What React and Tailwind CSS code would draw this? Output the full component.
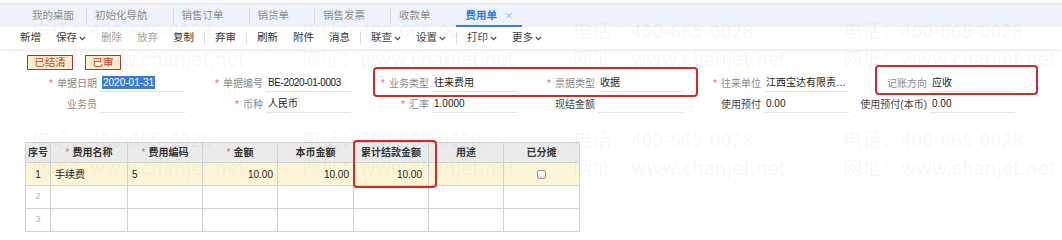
const FONT = { fontFamily: '"Liberation Sans", "Noto Sans CJK SC", sans-serif' }

const TABS = ['我的桌面', '初始化导航', '销售订单', '销货单', '销售发票', '收款单']

const TOOLS = [
  { t: '新增' },
  { t: '保存', drop: true },
  { t: '删除', off: true },
  { t: '放弃', off: true },
  { t: '复制', sep: true },
  { t: '弃审', sep: true },
  { t: '刷新' },
  { t: '附件' },
  { t: '消息', sep: true },
  { t: '联查', drop: true },
  { t: '设置', drop: true, sep: true },
  { t: '打印', drop: true },
  { t: '更多', drop: true },
]

const ROW1 = [
  { label: '单据日期', req: true, value: '2020-01-31', selected: true },
  { label: '单据编号', req: true, value: 'BE-2020-01-0003', tight: true },
  { label: '业务类型', req: true, value: '往来费用' },
  { label: '票据类型', req: true, value: '收据' },
  { label: '往来单位', req: true, value: '江西宝达有限责…' },
  { label: '记账方向', value: '应收' },
]

const ROW2 = [
  { label: '业务员' },
  { label: '币种', req: true, value: '人民币' },
  { label: '汇率', req: true, value: '1.0000' },
  { label: '现结金额', dark: true },
  { label: '使用预付', dark: true, value: '0.00' },
  { label: '使用预付(本币)', dark: true, value: '0.00' },
]

const COLS = [
  { t: '序号', w: 'w-[25px]' },
  { t: '费用名称', w: 'w-[77px]', req: true },
  { t: '费用编码', w: 'w-[75px]', req: true },
  { t: '金额', w: 'w-[75px]', req: true },
  { t: '本币金额', w: 'w-[76px]' },
  { t: '累计结款金额', w: 'w-[75px]' },
  { t: '用途', w: 'w-[75px]' },
  { t: '已分摊', w: 'w-[76px]' },
]

function Chevron() {
  return (
    <svg width="7" height="5" viewBox="0 0 7 5" className="ml-[2px]">
      <path d="M0.8 0.9 L3.5 3.6 L6.2 0.9" fill="none" stroke="currentColor" strokeWidth="1.2" />
    </svg>
  )
}

function Field({ f }) {
  return (
    <div className="flex h-[18px] items-stretch">
      <div
        className={`flex w-[78px] items-center justify-end whitespace-nowrap ${
          f.dark ? 'text-[#444]' : 'text-[#8a8a8a]'
        }`}
      >
        {f.req && <span className="mr-[4px] text-[#ef6a6a]">*</span>}
        {f.label}
      </div>
      <div className="ml-[3px] flex w-[85px] items-center border-b border-[#e2e2e2] pl-[2px] text-[#222]">
        {f.selected ? (
          <span className="bg-[#3c7ad9] px-[1px] leading-[13px] text-white">{f.value}</span>
        ) : (
          <span className={`whitespace-nowrap ${f.tight ? 'tracking-[-0.4px]' : ''}`}>{f.value}</span>
        )}
      </div>
    </div>
  )
}

function Watermarks() {
  const xs = [32, 302, 573, 843]
  const ys = [20, 129]
  return (
    <div className="pointer-events-none absolute inset-0" style={{ fontFamily: '"Noto Sans CJK SC", sans-serif' }}>
      {ys.map((y) =>
        xs.map((x) => (
          <div key={`${x}-${y}`} className="absolute text-[19px] leading-[20px] tracking-[0.3px] text-black/[0.055]" style={{ left: x, top: y }}>
            <div className="whitespace-nowrap">电话：400-665-0028</div>
            <div className="mt-[8px] whitespace-nowrap">网址：www.chanjet.net</div>
          </div>
        ))
      )}
    </div>
  )
}

export default function App() {
  return (
    <div className="relative h-[240px] w-[1062px] overflow-hidden bg-white text-[10px]" style={FONT}>
      {/* 标签页 */}
      <div className="mt-[3px] flex h-[24px] items-stretch border-t border-[#dfe4ea] bg-[#eef3fb] pl-[24px] text-[10.5px]">
        {TABS.map((t, i) => (
          <div key={t} className="flex items-stretch">
            <div className={`flex items-center pl-[8px] text-[#8d8d8d] ${i === 0 ? 'pr-[12px]' : 'pr-[25px]'}`}>{t}</div>
            {i < TABS.length - 1 && <span className="h-[14px] w-px self-center bg-[#d6dce4]" />}
          </div>
        ))}
        <div className="flex items-center border-b-2 border-[#3b7fe3] pl-[10px] pr-[9px] pt-[2px] font-bold text-[#2f79e4]">
          费用单
          <span className="ml-[8px] text-[13px] font-normal text-[#b4bccb]">×</span>
        </div>
      </div>

      {/* 工具栏 */}
      <div className="flex h-[22px] items-center gap-[15px] pl-[20px] text-[10.5px] text-[#333] shadow-[0_2px_3px_rgba(0,0,0,0.07)]">
        {TOOLS.map((b) => (
          <div key={b.t} className="contents">
            <span className={`flex items-center ${b.off ? 'text-[#a8a8a8]' : ''} ${b.drop ? 'text-[#444]' : ''}`}>
              {b.t}
              {b.drop && <Chevron />}
            </span>
            {b.sep && <span className="-mx-[5px] h-[12px] w-px bg-[#dcdcdc]" />}
          </div>
        ))}
      </div>

      {/* 状态 */}
      <div className="ml-[27px] mt-[6px] flex h-[15px] gap-[12px] text-[10.5px]">
        <span className="flex w-[46px] items-center justify-center border-[1.5px] border-[#b9302a] bg-[#fcf0cf] text-[#d5372d]">已结清</span>
        <span className="flex w-[36px] items-center justify-center border-[1.5px] border-[#b9302a] bg-[#fcf0cf] text-[#d5372d]">已审</span>
      </div>

      {/* 表头 */}
      <div className="ml-[19px] mt-[4px] grid grid-cols-[repeat(6,166px)] gap-y-[3px]">
        {ROW1.map((f) => (
          <Field key={f.label} f={f} />
        ))}
        {ROW2.map((f) => (
          <Field key={f.label} f={f} />
        ))}
      </div>

      {/* 表体 */}
      <table className="ml-[25px] mt-[29px] table-fixed border-collapse">
        <thead>
          <tr className="h-[20px] bg-[#ebebeb]">
            {COLS.map((c) => (
              <th key={c.t} className={`${c.w} border border-[#d2d2d2] p-0 text-center font-bold text-[#333]`}>
                {c.req && <span className="mr-[3px] font-normal text-[#ef6a6a]">*</span>}
                {c.t}
              </th>
            ))}
          </tr>
        </thead>
        <tbody>
          <tr className="h-[23px] bg-[#fdf6d6] text-[#222]">
            <td className="border border-[#d2d2d2] text-center">1</td>
            <td className="border border-[#d2d2d2] pl-[4px]">手续费</td>
            <td className="border border-[#d2d2d2] pl-[4px]">5</td>
            <td className="border border-[#d2d2d2] pr-[4px] text-right">10.00</td>
            <td className="border border-[#d2d2d2] pr-[4px] text-right">10.00</td>
            <td className="border border-[#d2d2d2] pr-[6px] text-right">10.00</td>
            <td className="border border-[#d2d2d2]" />
            <td className="border border-[#d2d2d2]">
              <span className="mx-auto block h-[9px] w-[9px] rounded-[2px] border border-[#9a9a9a] bg-gradient-to-b from-white to-[#e4e4e4]" />
            </td>
          </tr>
          {[2, 3].map((n) => (
            <tr key={n} className="h-[23px]">
              <td className="border border-[#d2d2d2] text-center text-[9px] text-[#b5b5b5]">{n}</td>
              {COLS.slice(1).map((c) => (
                <td key={c.t} className="border border-[#d2d2d2]" />
              ))}
            </tr>
          ))}
        </tbody>
      </table>

      <Watermarks />

      {/* 标注框 */}
      <div className="absolute left-[373px] top-[67px] h-[30px] w-[325px] rounded-[4px] border-2 border-[#d62b22]" />
      <div className="absolute left-[875px] top-[65px] h-[30px] w-[163px] rounded-[4px] border-2 border-[#d62b22]" />
      <div className="absolute left-[353px] top-[140px] h-[48px] w-[84px] rounded-[4px] border-2 border-[#d62b22]" />
    </div>
  )
}
